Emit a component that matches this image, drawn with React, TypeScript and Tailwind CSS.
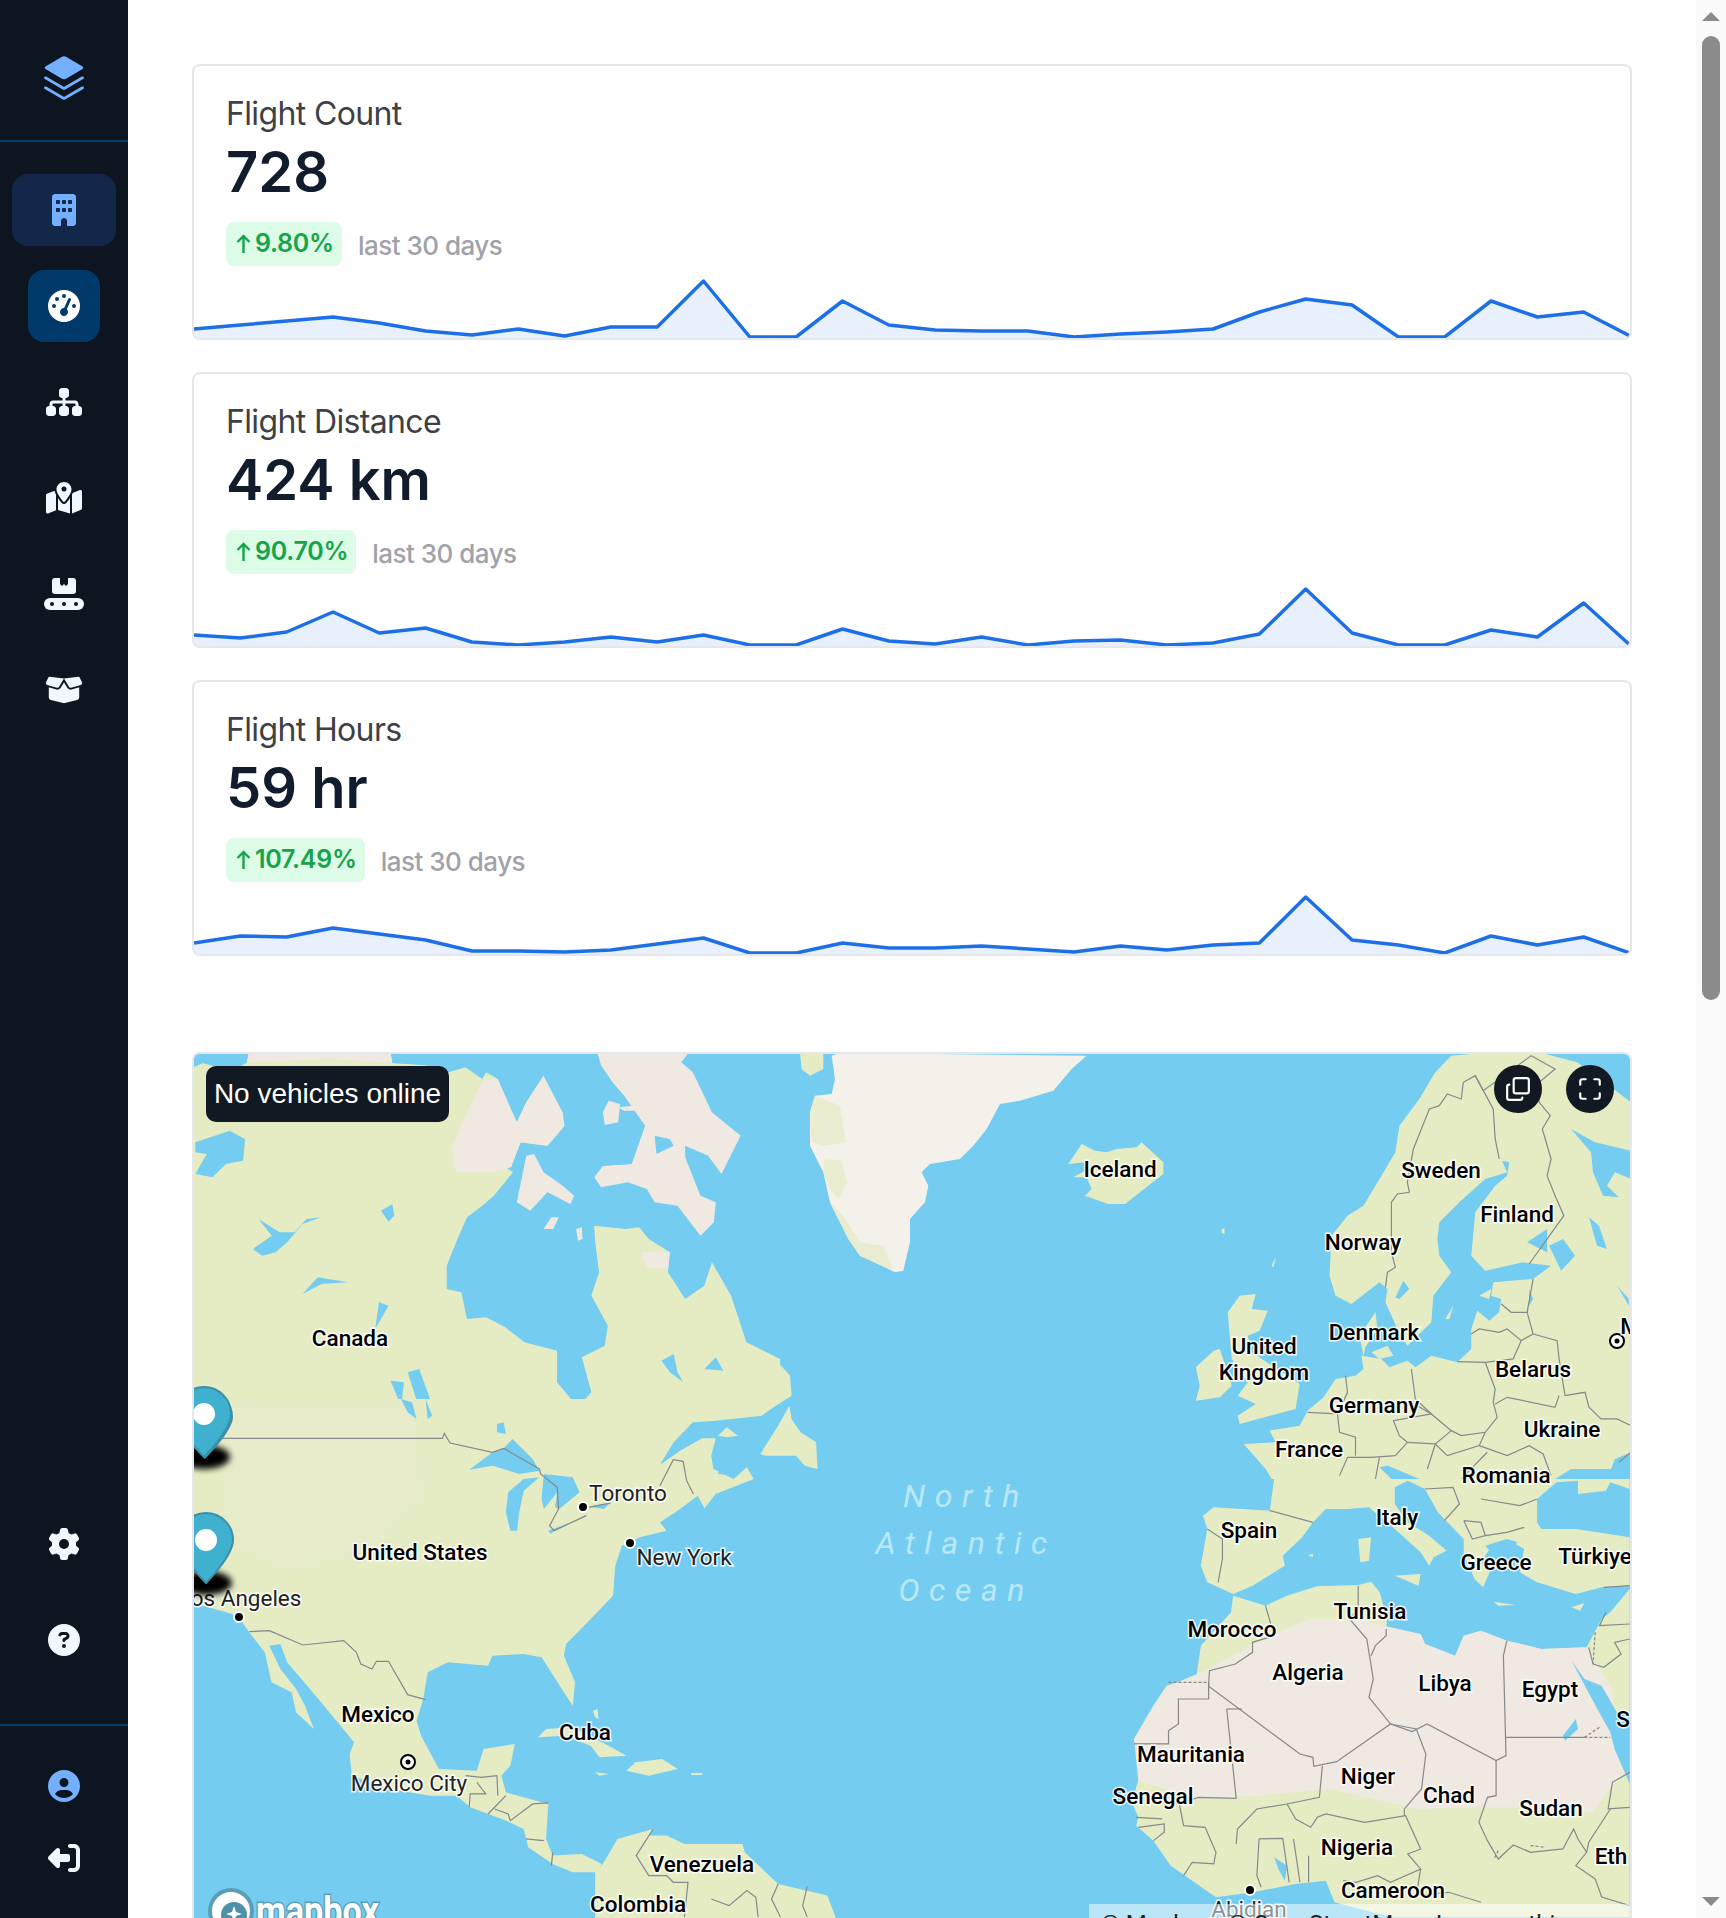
import { Copy, Maximize } from 'lucide-react';
import {
  FaBuilding,
  FaGaugeHigh,
  FaSitemap,
  FaMapLocationDot,
  FaBoxOpen,
  FaGear,
  FaCircleQuestion,
  FaCircleUser,
  FaRightFromBracket,
} from 'react-icons/fa6';

const LAND = '#e5ecc4';
const SAND = '#efe9e1';
const WATER = '#74cdf1';
const LINE = '#85898a';

// map shapes, traced per region in that region's own coordinates
const Z6 = 'translate(180 1040) scale(0.3827 0.3333)';
const Z7 = 'translate(1100 1040) scale(0.3992 0.3333)';
const Z8 = 'translate(180 1400) scale(0.4464 0.3333)';
const Z9 = 'translate(1050 1480) scale(0.431 0.3333)';
const Z11 = 'translate(760 1050) scale(0.3333 0.3333)';

function Shapes({ t, fill, items, soft }: { t: string; fill: string; items: string[]; soft?: boolean }) {
  return (
    <g transform={t} fill={fill} filter={soft ? 'url(#soft-edge)' : undefined}>
      {items.map((p, i) => (
        <polygon key={i} points={p} />
      ))}
    </g>
  );
}

function Borders({ t, items, dashed }: { t: string; items: string[]; dashed?: boolean }) {
  return (
    <g transform={t} fill="none" stroke={LINE} strokeWidth={1.2} strokeDasharray={dashed ? '3 2' : undefined}>
      {items.map((p, i) => (
        <polyline key={i} points={p} vectorEffect="non-scaling-stroke" />
      ))}
    </g>
  );
}

const northLand = [
  '0,100 60,72 140,95 175,70 180,40 550,40 555,72 640,78 700,100 745,85 790,120 800,100 830,120 880,250 905,190 950,110 1000,220 1005,260 960,320 890,310 865,385 810,350 870,400 820,470 790,500 750,535 725,600 697,680 697,750 735,760 750,840 800,835 850,865 900,910 985,935 985,1030 1040,1105 1075,1060 1050,955 1110,920 1118,860 1075,770 1095,700 1085,610 1082,560 1165,570 1200,565 1225,600 1280,640 1275,700 1320,780 1370,740 1390,670 1440,770 1480,910 1568,960 1568,1320 0,1320',
];
const northSand = [
  '1090,40 1330,40 1310,70 1340,100 1390,220 1465,290 1415,405 1380,350 1320,320 1320,355 1360,470 1400,490 1395,550 1360,590 1300,500 1240,490 1220,450 1170,430 1100,445 1082,415 1105,380 1180,375 1215,260 1160,170 1130,130 1100,80',
  '175,70 180,40 550,40 555,72 400,60',
  '710,330 750,220 790,125 830,120 880,250 905,190 950,110 1000,220 1005,260 960,320 890,310 865,385 810,400 720,400',
  '1205,640 1280,640 1275,690 1220,685',
];
const northIslands = [
  '880,490 905,350 925,345 950,400 1000,440 1030,470 1020,495 960,460 915,515',
  '1105,220 1120,185 1150,195 1145,250 1110,258',
  '950,570 970,535 990,535 975,570',
  '1035,570 1050,565 1052,600 1040,605',
  '1145,205 1180,200 1190,215 1160,215',
];
const northWater = [
  '40,310 130,275 170,300 165,365 120,375 85,415 40,405 70,345 40,340',
  '190,630 240,590 205,540 260,580 300,580 330,540 368,535 320,555 280,610 250,640 215,650',
  '320,765 360,715 440,730 370,735',
  '510,870 520,790 545,800',
  '525,515 555,495 560,530 545,548',
  '595,1000 625,990 660,1100 655,1145 640,1150 620,1090',
  '550,1025 585,1030 580,1085 622,1145 600,1130 570,1080',
  '830,1160 850,1150 852,1185 830,1185',
  '1258,965 1290,945 1300,1000 1315,1030 1280,1000',
  '1370,990 1400,955 1420,995',
  '1240,290 1280,300 1290,320 1245,345',
];
const gulf = ['1255,1275 1290,1210 1340,1150 1400,1145 1520,1130 1568,1090 1600,1090 1600,1320 1255,1320'];

const usLand = [
  '0,0 1070,0 1078,195 1120,155 1170,118 1200,118 1190,170 1195,210 1240,240 1270,205 1285,240 1200,285 1175,328 1160,290 1110,340 1075,370 1090,395 1030,415 990,440 975,500 970,590 920,660 865,735 860,770 885,850 880,920 860,880 810,775 770,765 700,770 690,800 600,790 555,820 545,900 530,965 540,1010 580,1110 665,1115 680,1050 750,1035 740,1100 720,1130 730,1180 825,1215 820,1320 835,1370 900,1365 945,1395 935,1420 880,1420 835,1395 780,1345 770,1290 730,1265 650,1225 620,1190 560,1190 470,1170 385,1130 380,1065 390,1030 310,900 240,790 225,735 200,740 225,810 260,870 280,920 300,990 260,940 250,880 205,850 190,760 155,700 130,650 0,600',
  '945,1400 980,1320 1060,1290 1050,1310 1090,1310 1130,1335 1260,1335 1265,1360 1340,1455 1450,1490 1470,1560 930,1560 930,1420',
];
const usIslands = [
  '802,1015 820,990 880,985 960,1040 1000,1070 940,1075 920,1040 860,1010',
  '1020,1090 1080,1080 1115,1110 1050,1130 1000,1115',
  '930,1120 960,1125 940,1130',
  '1145,1122 1170,1122 1170,1128 1145,1128',
  '925,935 935,930 938,960 930,955',
  '1300,165 1340,80 1365,20 1370,60 1390,100 1425,130 1428,210 1400,200 1380,170 1310,170',
  '1205,110 1225,85 1250,110 1225,115',
];
const usWater = [
  '648,212 700,160 725,148 745,120 790,180 805,215 760,225 700,200',
  '735,280 770,240 805,235 770,275 760,340 755,395 740,395 730,340',
  '815,225 880,235 895,280 850,330 840,325 845,280 815,330 810,300',
  '825,395 905,355 915,345 840,395 830,405',
  '920,322 965,310 950,330 920,325',
  '710,75 725,70 730,105 710,100',
  '495,0 520,10 530,60 510,40',
  '550,0 565,50 555,60',
  '1210,205 1240,230 1205,225',
];
const usBorders = [
  '0,118 588,118 592,103 605,132 700,160 725,148 805,210 808,225 845,265 848,330 828,380 838,395 910,350',
  '915,325 965,312',
  '1075,260 1105,182 1127,187 1135,245 1150,285',
  '155,698 200,695 275,738 367,725 395,760 405,795 430,810 440,787 467,787 510,887 550,902',
  '640,1130 675,1135 710,1130 712,1190',
  '665,1150 685,1185 650,1185 648,1225',
  '690,1245 730,1190',
  '705,1230 735,1245 740,1265 790,1215 825,1212',
  '775,1320 815,1325',
  '835,1360 832,1400',
  '1060,1290 1022,1370 1050,1430 1090,1430 1105,1450 1138,1450 1130,1554',
  '1190,1500 1230,1520 1270,1475 1290,1495 1295,1554',
  '1340,1455 1325,1500 1345,1554',
  '1405,1462 1395,1520 1405,1554',
];

const europeLand = [
  '1600,190 1330,190 1230,100 1195,70 1100,40 980,40 880,50 840,100 800,180 750,260 740,340 690,440 660,500 620,530 580,590 575,710 590,770 630,795 700,730 720,750 715,790 745,870 770,920 830,850 835,770 880,700 850,650 845,600 850,550 900,490 965,420 1020,400 1005,360 960,355 1025,370 1020,410 990,440 940,520 930,650 965,695 1060,670 1130,680 1085,720 985,730 980,770 1005,780 1000,820 975,845 945,815 930,870 930,930 895,970 830,950 790,985 770,965 725,985 705,960 655,950 660,990 640,1010 590,1020 560,1075 520,1115 500,1160 425,1175 440,1210 360,1215 415,1290 430,1320 1600,1320',
];
const europeIslands = [
  '320,820 350,770 390,765 380,810 420,815 400,875 370,890 380,940 500,1035 490,1110 350,1155 345,1130 390,1095 345,1070 370,1030 330,960',
  '240,985 285,935 300,930 330,1040 300,1075 240,1085 250,1040',
  '650,890 690,820 695,870 665,925 660,950',
  '680,940 720,920 735,950 700,960',
  '865,840 885,800 875,840',
  '950,770 980,750 975,780',
  '430,680 440,655 435,685',
  '305,570 312,568 312,585 305,582',
];
const europeWater = [
  '1180,270 1240,310 1330,335 1330,420 1290,400 1270,440 1300,475 1260,470 1235,400 1230,340',
  '1125,620 1160,600 1190,650 1155,695',
  '1225,535 1250,560 1270,630 1245,620',
  '1070,610 1120,570 1120,640',
  '740,775 760,725 775,750 750,780',
  '1075,750 1085,780 1075,800',
  '1295,740 1325,780 1325,800',
  '1140,1320 1180,1290 1280,1290 1290,1260 1330,1240 1330,1320',
  '700,1285 720,1280 800,1320 730,1320',
];
const europeBorders = [
  '910,130 940,110 985,210 990,300 1000,360',
  '910,130 905,180 870,165 850,200 825,210 785,330 770,430 775,460 745,465 730,490 730,640 740,685 720,700 715,745',
  '940,110 960,155 1080,50 1140,90 1100,130 1100,190 1128,230 1108,270 1130,360 1120,410 1140,470 1162,530 1075,675',
  '1085,720 1070,820 1085,885',
  '930,885 950,870 1000,880 1020,870 1055,905 1085,885',
  '1005,795 1030,820 1070,820',
  '1055,905 1035,960 965,970 895,968',
  '1085,885 1145,905 1150,960 1165,1070 1215,1060 1225,1105 1255,1140 1295,1140 1330,1160',
  '780,990 790,1080 830,1125 880,1175 905,1190 965,1180 995,1135 985,1090 990,1050 965,970',
  '990,1095 1020,1075 1140,1105 1150,1070',
  '615,1010 620,1060 595,1125 600,1180 640,1195 640,1250',
  '595,1125 520,1120',
  '780,1090 830,1125 735,1145 750,1190 770,1210 740,1250 680,1255 620,1255 600,1310',
  '770,1210 840,1215 880,1175',
  '840,1215 870,1250 950,1220 965,1180',
  '950,1220 1020,1250 1075,1220 1110,1245 1130,1310',
  '820,1290 840,1215',
  '905,1320 970,1240',
  '700,1255 690,1320',
  '1300,1270 1330,1240',
];

const africaLand = [
  '425,350 500,380 550,350 620,322 715,318 745,308 765,340 782,420 780,450 860,465 870,495 940,530 960,470 1000,455 1060,485 1140,510 1245,505 1280,420 1300,400 1345,330 1345,1314 790,1314 660,1270 640,1205 570,1215 470,1240 385,1255 280,1160 240,1085 200,1040 205,1015 190,970 210,880 195,780 240,680 270,620 340,590 350,500 420,400',
];
const africaSand = [
  '270,625 368,570 480,490 600,420 720,420 775,440 860,465 870,495 940,530 960,470 1000,455 1060,485 1140,510 1245,505 1300,620 1340,880 1300,925 1260,1000 1100,985 1000,985 850,990 650,930 480,950 340,960 205,905 195,780 240,680',
];
const medLand = [
  '520,0 510,95 380,85 355,110 365,150 350,260 365,310 425,345 470,320 545,260 540,230 585,175 610,130 640,90 690,90 740,85 800,150 860,220 880,260 870,285 890,235 920,215 880,170 830,130 800,75 800,25 830,5 870,30 900,100 960,180 960,225 985,300 1005,325 1020,280 1000,250 1020,210 1060,180 1100,210 1090,280 1130,310 1220,345 1280,325 1345,320 1345,0',
];
const medIslands = [
  '715,180 745,175 740,245 720,250',
  '800,290 860,285 855,320',
  '1030,368 1080,378 1040,380',
  '1210,385 1240,372 1230,395',
  '598,228 610,225 610,235',
];
const medWater = [
  '1130,130 1130,60 1175,10 1225,5 1225,45 1290,35 1300,10 1345,30 1345,175 1220,150 1140,150',
  '1210,545 1240,600 1280,620 1315,700 1345,700 1345,915 1310,810 1300,760 1270,690',
  '1190,770 1220,720 1225,750 1195,785',
  '520,1135 550,1160 545,1205 530,1170',
  '1010,200 1060,180 1085,190 1060,215 1020,215',
];
const africaBorders = [
  '510,95 610,130',
  '365,150 400,180 400,240 390,310',
  '500,380 520,470 470,490 470,520 430,555 370,575 368,622 580,825 610,835 612,862 665,848 790,735 840,758 875,735 1035,845 1058,830 1052,530 1060,485',
  '368,610 368,660 298,660 298,735 275,755 275,795 195,795',
  '410,690 445,690',
  '410,690 432,958 345,955 290,975',
  '632,860 625,955 550,975 480,990 435,1050 432,1095',
  '790,735 850,750 872,825 862,930 822,990 822,1010',
  '715,320 715,390 695,420 735,480 750,600 740,655 790,735',
  '780,450 780,470 755,500 745,530',
  '1058,775 1240,775',
  '1035,845 1035,950 1015,955 995,1030 1015,1085 1040,1140 1075,1098 1115,1120 1190,1110 1215,1050 1225,1080 1245,1120 1220,1160 1265,1200 1280,1254 1345,1280',
  '550,975 570,1020 605,1045 620,1015 640,1005 730,1030 825,1010 860,1110 830,1125 860,1170 790,1210 760,1190 710,1210 680,1205',
  '485,1080 540,1078 555,1210',
  '485,1080 480,1190 490,1225',
  '565,1080 580,1210',
  '600,1130 600,1210',
  '300,975 310,1040 360,1045 385,1120 380,1155 330,1150 310,1190',
  '870,30 935,25 950,75 915,125',
  '1000,60 1090,80 1130,60',
  '960,125 980,180 1010,170 1000,130 960,125',
  '1010,170 1060,160 1100,145',
  '1285,325 1345,320',
  '1290,400 1275,440 1345,435',
  '1345,480 1310,490 1325,525 1285,565 1260,555 1250,505',
  '1345,880 1305,910 1295,990 1345,985',
  '1300,990 1250,1090 1245,1120',
  '200,1015 260,1020',
  '205,1045 265,1035 265,1060 240,1085',
  '860,1170 850,1250 925,1240 1000,1270',
];
const dashedBorders = ['275,610 368,610', '1240,775 1300,775', '1240,775 1275,745', '1265,460 1260,555', '1040,1115 1030,1140', '1115,1100 1150,1105'];

const greenland = ['240,12 980,20 935,60 880,125 780,155 720,165 680,240 640,290 600,330 510,345 485,370 505,410 495,460 450,510 450,580 430,665 405,670 375,655 300,620 265,570 210,460 190,370 150,290 150,190 165,140 215,135 225,90 215,20'];
const greenlandGreen = ['165,140 240,170 258,280 190,290 155,280 150,190', '190,330 245,335 260,400 235,450 210,420 190,370', '210,460 250,500 300,580 370,590 400,660 375,655 300,620 265,570'];
const northEastLand = [
  '0,905 45,930 90,980 95,1040 0,1100',
  '925,345 965,285 1005,305 1040,310 1070,300 1130,295 1145,280 1210,340 1210,375 1140,430 1095,465 1045,465 975,440 995,420 980,385 940,385 975,365 975,340',
  '120,12 190,12 190,60 150,80 125,60',
];

type Label = [string, number, number, boolean?];

// text positions are centres on the page, the last flag marks a city
const labels: Label[] = [
  ['Iceland', 1120, 1170],
  ['Sweden', 1441, 1171],
  ['Finland', 1517, 1215],
  ['Norway', 1363, 1243],
  ['Denmark', 1374, 1333],
  ['United', 1264, 1347],
  ['Kingdom', 1264, 1373],
  ['Belarus', 1533, 1370],
  ['Germany', 1374, 1406],
  ['Ukraine', 1562, 1430],
  ['France', 1309, 1450],
  ['Romania', 1506, 1476],
  ['Italy', 1397, 1518],
  ['Spain', 1249, 1531],
  ['Greece', 1496, 1563],
  ['Türkiye', 1595, 1557],
  ['Tunisia', 1370, 1612],
  ['Morocco', 1232, 1630],
  ['Algeria', 1308, 1673],
  ['Libya', 1445, 1684],
  ['Egypt', 1550, 1690],
  ['Mauritania', 1191, 1755],
  ['Niger', 1368, 1777],
  ['Chad', 1449, 1796],
  ['Senegal', 1153, 1797],
  ['Sudan', 1551, 1809],
  ['Nigeria', 1357, 1848],
  ['Eth', 1611, 1857],
  ['Cameroon', 1393, 1891],
  ['Canada', 350, 1339],
  ['United States', 420, 1553],
  ['Toronto', 628, 1494, true],
  ['New York', 684, 1558, true],
  ['Los Angeles', 240, 1599, true],
  ['Mexico', 378, 1715],
  ['Cuba', 585, 1733],
  ['Mexico City', 409, 1784, true],
  ['Venezuela', 702, 1865],
  ['Colombia', 638, 1905],
  ['Abidjan', 1249, 1910, true],
  ['S', 1623, 1720],
  ['M', 1630, 1327],
];

function Pin({ cx, tip, second }: { cx: number; tip: number; second?: boolean }) {
  const head = tip - 43;
  return (
    <g>
      <ellipse cx={cx} cy={tip} rx={26} ry={12} fill="#000" filter="url(#pin-blur)" />
      {second && (
        <path
          d={`M${cx + 1} ${tip + 2} C${cx + 1} ${tip + 2} ${cx + 29} ${head + 17} ${cx + 29} ${head + 3} A27 27 0 1 0 ${cx - 27} ${head + 3} C${cx - 27} ${head + 17} ${cx + 1} ${tip + 2} ${cx + 1} ${tip + 2}Z`}
          fill="#3a8fac"
        />
      )}
      <path
        d={`M${cx} ${tip} C${cx} ${tip} ${cx + 27} ${head + 16} ${cx + 27} ${head} A27 27 0 1 0 ${cx - 27} ${head} C${cx - 27} ${head + 16} ${cx} ${tip} ${cx} ${tip}Z`}
        fill="#3fb1ce"
        stroke="#3a8fac"
        strokeWidth={2}
      />
      <circle cx={cx} cy={head} r={11} fill="#fff" />
    </g>
  );
}

function WorldMap() {
  return (
    <svg viewBox="194 1055 1436 890" className="absolute inset-0 h-full w-full" preserveAspectRatio="none">
      <defs>
        <filter id="pin-blur" x="-30%" y="-60%" width="160%" height="220%">
          <feGaussianBlur stdDeviation="3" />
        </filter>
        <filter id="soft-edge" x="-20%" y="-20%" width="140%" height="140%">
          <feGaussianBlur stdDeviation="14" />
        </filter>
      </defs>
      <rect x="194" y="1055" width="1436" height="890" fill={WATER} />

      <Shapes t={Z6} fill={LAND} items={northLand} />
      <Shapes t={Z6} fill={SAND} items={northSand} />
      <Shapes t={Z6} fill={WATER} items={[
        '555,40 750,40 745,85 700,100 640,78 555,72',
        '0,40 175,40 175,70 140,95 60,72 0,100',
        '785,40 890,40 880,110 840,100 800,100',
        '1000,40 1090,40 1100,80 1130,130 1160,170 1215,260 1180,375 1105,380 1082,415 1100,445 1000,440 950,400 1005,260 1000,220 950,110',
        '1082,500 1240,500 1300,510 1360,600 1280,640 1200,565 1082,560',
      ]} />
      <Shapes t={Z6} fill={SAND} items={northIslands} />
      <Shapes t={Z6} fill={WATER} items={northWater} />
      <Shapes t={Z6} fill={WATER} items={gulf} />

      <Shapes t={Z8} fill={LAND} items={usLand} />
      <Shapes t={Z8} fill="#e7ebca" items={['90,20 520,20 540,300 430,440 250,520 110,440']} soft />
      <Shapes t={Z8} fill={LAND} items={usIslands} />
      <Shapes t={Z8} fill={WATER} items={usWater} />
      <Borders t={Z8} items={usBorders} />

      <Shapes t={Z11} fill="#f4f1ea" items={greenland} />
      <Shapes t={Z11} fill="#eaecd0" items={greenlandGreen} />
      <Shapes t={Z11} fill={LAND} items={northEastLand} />

      <Shapes t={Z7} fill={LAND} items={europeLand} />
      <Shapes t={Z7} fill={LAND} items={europeIslands} />
      <Shapes t={Z7} fill={WATER} items={europeWater} />
      <Borders t={Z7} items={europeBorders} />

      <Shapes t={Z9} fill={LAND} items={africaLand} />
      <Shapes t={Z9} fill={SAND} items={africaSand} />
      <Shapes t={Z9} fill={LAND} items={medLand} />
      <Shapes t={Z9} fill={LAND} items={medIslands} />
      <Shapes t={Z9} fill={WATER} items={medWater} />
      <Borders t={Z9} items={africaBorders} />
      <Borders t={Z9} items={dashedBorders} dashed />

      <g fill="#000" stroke="#fff" strokeWidth={2}>
        <circle cx={583} cy={1508} r={5} />
        <circle cx={630} cy={1544} r={5} />
        <circle cx={239} cy={1618} r={5} />
        <circle cx={1250} cy={1891} r={5} />
      </g>
      <g fill="#000" stroke="#fff" strokeWidth={2}>
        <circle cx={408} cy={1763} r={7} fill="#fff" stroke="#000" />
        <circle cx={408} cy={1763} r={2.5} stroke="none" />
        <circle cx={1617} cy={1342} r={7} fill="#fff" stroke="#000" />
        <circle cx={1617} cy={1342} r={2.5} stroke="none" />
      </g>

      <g style={{ fontFamily: 'Roboto, sans-serif' }} textAnchor="middle">
        {labels.map(([text, x, y, city]) => (
          <text
            key={text}
            x={x}
            y={y + 8}
            fontSize={22.5}
            fontWeight={city ? 400 : 500}
            fill={city ? '#222' : '#000'}
            stroke="#fff"
            strokeOpacity={0.85}
            strokeWidth={3}
            paintOrder="stroke"
          >
            {text}
          </text>
        ))}
        <g fontSize={32} fontStyle="italic" fontWeight={400} fill="#b9e8f8" letterSpacing={9.5}>
          <text x={966} y={1508}>North</text>
          <text x={966} y={1555}>Atlantic</text>
          <text x={966} y={1602}>Ocean</text>
        </g>
      </g>

      <Pin cx={204} tip={1458} second />
      <Pin cx={206} tip={1584} />

      <g>
        <circle cx={231} cy={1912} r={21} fill="#fff" stroke="#5b9db8" strokeWidth={4} />
        <circle cx={234} cy={1916} r={13} fill="#4e8fa9" />
        <path d="M234 1907l2 6 6 2-6 2-2 6-2-6-6-2 6-2z" fill="#fff" />
        <text
          x={256}
          y={1926}
          fontSize={40}
          fontWeight={700}
          fill="#fff"
          stroke="#5b9db8"
          strokeWidth={3}
          paintOrder="stroke"
          textLength={123}
          lengthAdjust="spacingAndGlyphs"
          style={{ fontFamily: 'Roboto, sans-serif' }}
        >
          mapbox
        </text>
      </g>
    </svg>
  );
}

function Sparkline({ values }: { values: number[] }) {
  const step = 1436 / 31;
  const line = values.map((v, i) => `${(i * step).toFixed(1)},${v}`).join(' ');
  return (
    <svg viewBox="0 0 1436 60" preserveAspectRatio="none" className="block h-[60px] w-full">
      <polygon points={`0,60 ${line} 1436,60`} fill="#e8f0fd" />
      <polyline points={line} fill="none" stroke="#1d6fe8" strokeWidth={3.5} strokeLinejoin="round" />
    </svg>
  );
}

function StatCard({ title, value, change, data }: { title: string; value: string; change: string; data: number[] }) {
  return (
    <div className="flex h-[276px] flex-col overflow-hidden rounded-lg border-2 border-[#e5e7eb] bg-white">
      <div className="flex-1 px-8 pt-[28px]">
        <div className="text-[32px] leading-[40px] tracking-[-0.02em] text-[#3f3f46]">{title}</div>
        <div className="mt-[8px] text-[56px] leading-[60px] font-semibold text-[#111c2d]">{value}</div>
        <div className="mt-[20px] flex items-center gap-4">
          <span className="flex h-[44px] items-center rounded-lg bg-[#dcfce7] px-2 text-[25px] font-semibold tracking-[-0.01em] text-[#16a34a]">
            <svg viewBox="0 0 16 20" className="mr-[3px] ml-[1px] h-[20px] w-[17px]" fill="none" stroke="currentColor" strokeWidth={2.4}>
              <path d="M8 19V2M2 8l6-6 6 6" />
            </svg>
            {change}
          </span>
          <span className="pt-[2px] text-[26px] font-medium tracking-[-0.02em] text-[#a1a1aa]">last 30 days</span>
        </div>
      </div>
      <Sparkline values={data} />
    </div>
  );
}

function ConveyorIcon() {
  return (
    <svg viewBox="0 0 40 32" className="h-[32px] w-[40px]" fill="#f0f7ff">
      <path d="M11 0h5v6l2 2 2-2 2 2 2-2V0h5a3 3 0 0 1 3 3v10a3 3 0 0 1-3 3H11a3 3 0 0 1-3-3V3a3 3 0 0 1 3-3z" />
      <rect x="0" y="20" width="40" height="12" rx="6" />
      <g fill="#0d1520">
        <circle cx="8" cy="26" r="2" />
        <circle cx="20" cy="26" r="2" />
        <circle cx="32" cy="26" r="2" />
      </g>
    </svg>
  );
}

function LogoIcon() {
  return (
    <svg viewBox="0 0 40 44" className="h-[44px] w-[40px]" fill="#74b0ff">
      <path d="M17.500 1a5 5 0 0 1 5 0l16 9.500a1.500 1.500 0 0 1 0 2.600l-16 9.500a5 5 0 0 1-5 0l-16-9.500a1.500 1.500 0 0 1 0-2.600z" />
      <path d="M2.200 20.600l17 10a1.600 1.600 0 0 0 1.600 0l17-10c1-.6 2.200.1 2.200 1.200 0 .6-.3 1-.8 1.300L21.200 33.500a2.400 2.400 0 0 1-2.400 0L.8 23.100c-.5-.3-.8-.7-.8-1.300 0-1.100 1.200-1.800 2.200-1.200z" />
      <path d="M2.200 30.600l17 10a1.600 1.600 0 0 0 1.600 0l17-10c1-.6 2.200.1 2.200 1.200 0 .6-.3 1-.8 1.300L21.200 43.500a2.400 2.400 0 0 1-2.400 0L.8 33.100c-.5-.3-.8-.7-.8-1.300 0-1.100 1.200-1.800 2.200-1.200z" />
    </svg>
  );
}

function Sidebar() {
  return (
    <aside className="flex h-full w-[128px] shrink-0 flex-col bg-[#0d1520] text-[#f0f7ff]">
      <div className="flex h-[140px] items-center justify-center pt-[16px]">
        <LogoIcon />
      </div>
      <nav className="flex flex-col items-center gap-6 border-t-2 border-[#023e70] pt-8">
        <a className="flex h-[72px] w-[104px] items-center justify-center rounded-2xl bg-[#13274a] text-[#74b0ff]">
          <FaBuilding size={32} />
        </a>
        <a className="flex h-[72px] w-[72px] items-center justify-center rounded-2xl bg-[#003a6b] text-white">
          <FaGaugeHigh size={32} />
        </a>
        <a className="flex h-[72px] w-[72px] items-center justify-center">
          <FaSitemap size={36} />
        </a>
        <a className="flex h-[72px] w-[72px] items-center justify-center">
          <FaMapLocationDot size={36} />
        </a>
        <a className="flex h-[72px] w-[72px] items-center justify-center">
          <ConveyorIcon />
        </a>
        <a className="flex h-[72px] w-[72px] items-center justify-center">
          <FaBoxOpen size={38} />
        </a>
      </nav>
      <div className="mt-auto flex flex-col items-center gap-6 pb-[48px]">
        <a className="flex h-[72px] w-[72px] items-center justify-center">
          <FaGear size={32} />
        </a>
        <a className="flex h-[72px] w-[72px] items-center justify-center">
          <FaCircleQuestion size={32} />
        </a>
      </div>
      <div className="flex flex-col items-center border-t-2 border-[#023e70] pt-[24px] pb-[24px]">
        <a className="flex h-[72px] w-[72px] items-center justify-center text-[#74b0ff]">
          <FaCircleUser size={32} />
        </a>
        <a className="flex h-[72px] w-[72px] items-center justify-center">
          <FaRightFromBracket size={32} className="-scale-x-100" />
        </a>
      </div>
    </aside>
  );
}

function Scrollbar() {
  return (
    <div className="flex h-full w-[30px] shrink-0 flex-col items-center bg-[#fafafa] pt-[12px] pb-[12px]">
      <svg viewBox="0 0 18 9" className="h-[9px] w-[18px]" fill="#8b8b8b">
        <path d="M9 0l9 9H0z" />
      </svg>
      <div className="mt-[15px] h-[964px] w-[18px] rounded-full bg-[#8b8b8b]" />
      <svg viewBox="0 0 18 9" className="mt-auto h-[9px] w-[18px]" fill="#8b8b8b">
        <path d="M0 0h18L9 9z" />
      </svg>
    </div>
  );
}

export default function App() {
  return (
    <div className="flex h-[1918px] overflow-hidden bg-white" style={{ fontFamily: 'Inter, sans-serif' }}>
      <Sidebar />
      <main className="min-w-0 flex-1 overflow-hidden px-16 pt-16">
        <div className="flex flex-col gap-8">
          <StatCard
            title="Flight Count"
            value="728"
            change="9.80%"
            data={[51, 47, 43, 39, 45, 53, 57, 51, 58, 49, 49, 3, 59, 59, 23, 47, 52, 53, 53, 59, 56, 54, 51, 34, 21, 27, 59, 59, 23, 39, 34, 58]}
          />
          <StatCard
            title="Flight Distance"
            value="424 km"
            change="90.70%"
            data={[49, 52, 46, 26, 47, 42, 56, 59, 56, 51, 56, 49, 59, 59, 43, 55, 58, 51, 59, 55, 54, 59, 57, 48, 3, 47, 59, 59, 44, 51, 17, 59]}
          />
          <StatCard
            title="Flight Hours"
            value="59 hr"
            change="107.49%"
            data={[49, 42, 43, 34, 40, 46, 57, 57, 58, 56, 50, 44, 59, 59, 49, 54, 54, 52, 55, 58, 52, 56, 51, 49, 3, 46, 51, 59, 42, 51, 43, 59]}
          />
        </div>
        <div className="relative mt-24 h-[894px] overflow-hidden rounded-lg border-2 border-[#e5e7eb]">
          <WorldMap />
          <div className="absolute top-[12px] left-[12px] flex h-[56px] w-[243px] items-center justify-center rounded-[10px] bg-[#111922] text-[28px] text-white" style={{ fontFamily: '"Liberation Sans", sans-serif' }}>
            No vehicles online
          </div>
          <div className="absolute top-[11px] right-[88px] flex h-[48px] w-[48px] items-center justify-center rounded-full bg-[#111922] text-white">
            <Copy size={26} strokeWidth={2} className="-scale-y-100" />
          </div>
          <div className="absolute top-[11px] right-[16px] flex h-[48px] w-[48px] items-center justify-center rounded-full bg-[#111922] text-white">
            <Maximize size={26} strokeWidth={2} />
          </div>
          <div className="absolute right-0 bottom-0 flex h-[40px] w-[541px] items-center gap-4 bg-white/50 px-3 text-[24px] whitespace-nowrap text-[#222]" style={{ fontFamily: 'Roboto, sans-serif' }}>
            <span>© Mapbox</span>
            <span>© OpenStreetMap</span>
            <span>Improve this map</span>
          </div>
        </div>
      </main>
      <Scrollbar />
    </div>
  );
}
